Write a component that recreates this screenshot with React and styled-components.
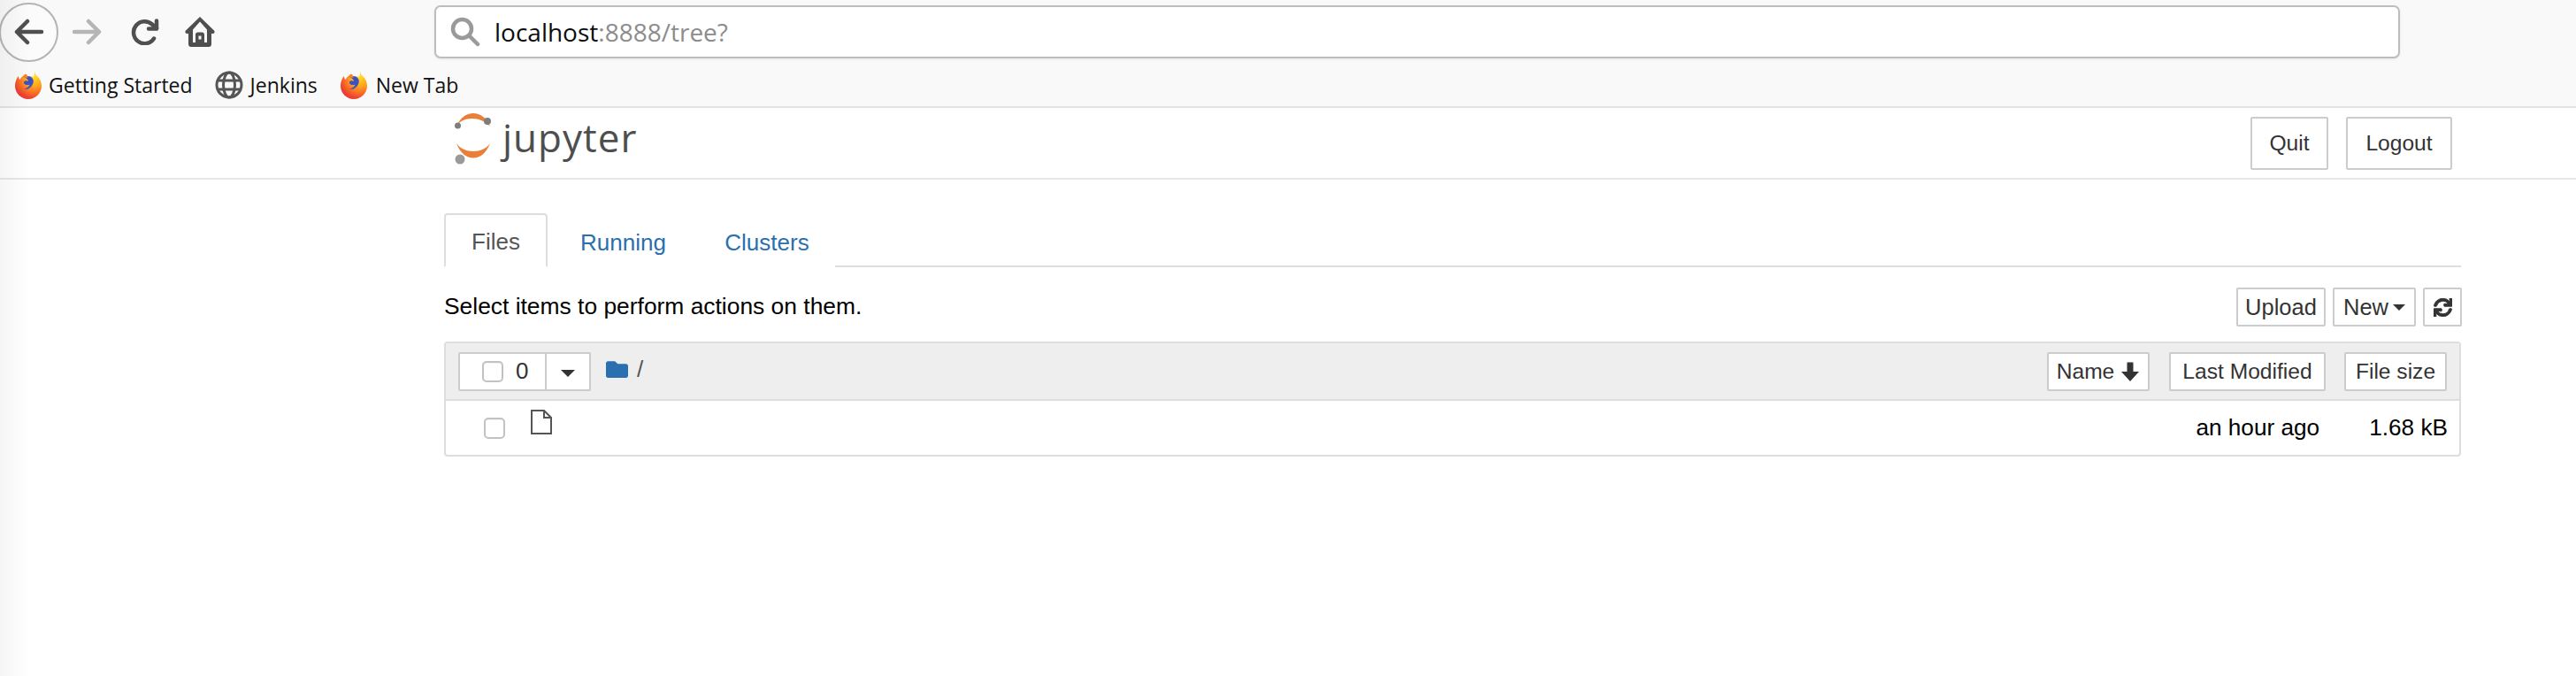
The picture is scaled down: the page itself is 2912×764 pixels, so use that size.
import React from "react";
import styled, { createGlobalStyle } from "styled-components";
import { FaFolder, FaSync } from "react-icons/fa";

const Global = createGlobalStyle`
  html, body { margin: 0; padding: 0; background: #fff; }
  body { font-family: "Liberation Sans", Arial, sans-serif; color: #000; width: 2912px; height: 764px; overflow: hidden; }
  * { box-sizing: border-box; }
`;

const Page = styled.div`
  position: relative;
  width: 2912px;
  height: 764px;
  overflow: hidden;
  &::after {
    content: "";
    position: absolute;
    top: 0; left: 0; bottom: 0;
    width: 34px;
    background: linear-gradient(to right, rgba(0,0,0,0.04), rgba(0,0,0,0));
    pointer-events: none;
  }
`;
const Chrome = styled.div`
  height: 122px;
  background: #f9f9f9;
  border-bottom: 2px solid #e3e3e3;
`;
const NavRow = styled.div`
  height: 72px;
  display: flex;
  align-items: center;
`;
const BackCircle = styled.div`
  width: 67px;
  height: 67px;
  margin-left: -1px;
  border: 2px solid #b4b4b4;
  border-radius: 50%;
  background: #fbfbfb;
  display: flex;
  align-items: center;
  justify-content: center;
  flex: none;
`;
const NavIcon = styled.svg`
  display: block;
  flex: none;
  margin-left: ${p => p.$ml}px;
`;
const AddressBar = styled.div`
  margin-left: 248px;
  width: 2222px;
  height: 60px;
  margin-top: -1px;
  background: #fff;
  border: 2px solid #bdbdbd;
  border-radius: 7px;
  box-shadow: 0 1px 3px rgba(0,0,0,0.08);
  display: flex;
  align-items: center;
  padding-left: 16px;
  font-family: "Open Sans", sans-serif;
  font-size: 28px;
`;
const Host = styled.span`
  margin-left: 16px;
  color: #0c0c0c;
`;
const Rest = styled.span`
  color: #8c8c8c;
`;
const BookmarkRow = styled.div`
  height: 48px;
  display: flex;
  align-items: center;
  padding-left: 17px;
`;
const Bookmark = styled.div`
  display: flex;
  align-items: center;
  gap: ${p => p.$gap}px;
  margin-right: ${p => p.$mr}px;
  font-family: "Open Sans", sans-serif;
  font-size: 23px;
  color: #111;
`;
const Header = styled.div`
  height: 81px;
  border-bottom: 2px solid #e7e7e7;
  padding: 0 140px 0 514px;
  display: flex;
  align-items: flex-start;
  justify-content: space-between;
`;
const Logo = styled.div`
  display: flex;
  align-items: flex-start;
  height: 79px;
`;
const LogoText = styled.span`
  font-family: "Open Sans", sans-serif;
  font-weight: 400;
  font-size: 44px;
  line-height: 1;
  color: #4e4e4e;
  margin: 11px 0 0 10px;
  letter-spacing: 1px;
`;
const HeaderButtons = styled.div`
  display: flex;
  gap: 20px;
  padding-top: 10px;
`;
const Btn = styled.div`
  display: inline-flex;
  align-items: center;
  justify-content: center;
  gap: ${p => p.$gap || 0}px;
  width: ${p => p.$w}px;
  height: ${p => p.$h || 44}px;
  background: #fff;
  border: 2px solid #ccc;
  border-radius: 2px;
  color: #333;
  font-size: ${p => p.$fs || 25.5}px;
  flex: none;
`;
const Main = styled.div`
  margin-left: 502px;
  width: 2280px;
`;
const Tabs = styled.div`
  margin-top: 38px;
  height: 61px;
  display: flex;
  align-items: stretch;
  border-bottom: 2px solid #ddd;
`;
const Tab = styled.div`
  font-size: 26px;
  display: flex;
  align-items: center;
  justify-content: center;
  padding-top: ${p => (p.$active ? 3 : 5)}px;
  width: ${p => p.$w}px;
  height: 61px;
  color: ${p => (p.$active ? "#555" : "#2a6faf")};
  background: #fff;
  border: ${p => (p.$active ? "2px solid #ddd" : "none")};
  border-bottom: ${p => (p.$active ? "2px solid #fff" : "none")};
  border-radius: 4px 4px 0 0;
`;
const ActionRow = styled.div`
  display: flex;
  justify-content: space-between;
  align-items: center;
  height: 44px;
  margin-top: 23px;
  font-size: 26.4px;
`;
const Hint = styled.span`
  padding-bottom: 2px;
`;
const ActionButtons = styled.div`
  display: flex;
  gap: 8px;
  margin-right: -1px;
`;
const Table = styled.div`
  margin-top: 17px;
  border: 2px solid #ddd;
  border-radius: 4px;
`;
const TableHead = styled.div`
  height: 65px;
  background: #eee;
  border-bottom: 2px solid #ddd;
  display: flex;
  align-items: center;
  padding: 0 14px 0 14px;
`;
const SelectGroup = styled.div`
  display: flex;
  width: 150px;
  height: 44px;
  background: #fff;
  border: 2px solid #ccc;
  border-radius: 2px;
  flex: none;
`;
const SelectLeft = styled.div`
  width: 98px;
  display: flex;
  align-items: center;
  padding-left: 25px;
  gap: 14px;
  color: #333;
  font-size: 26px;
  border-right: 2px solid #ccc;
`;
const Check = styled.span`
  display: block;
  width: 24px;
  height: 24px;
  background: #fff;
  border: 2px solid #c2c2c2;
  border-radius: 5px;
  box-shadow: inset 0 1px 1px rgba(0,0,0,0.05);
  flex: none;
`;
const SelectCaret = styled.div`
  flex: 1;
  display: flex;
  align-items: center;
  justify-content: center;
  padding-top: 4px;
`;
const Caret = styled.span`
  display: inline-block;
  border-top: ${p => p.$s}px solid #333;
  border-left: ${p => p.$s}px solid transparent;
  border-right: ${p => p.$s}px solid transparent;
`;
const Crumb = styled.div`
  display: flex;
  align-items: center;
  gap: 10px;
  margin-left: 17px;
  margin-top: -4px;
  flex: 1;
  color: #555;
  font-size: 26px;
  svg { color: #2a6faf; font-size: 25px; display: block; }
`;
const HeadButtons = styled.div`
  display: flex;
  gap: 21px;
`;
const NameButton = styled(Btn)`
  margin-right: 1px;
`;
const TableRow = styled.div`
  height: 61px;
  display: flex;
  align-items: center;
  padding: 0 13px 0 43px;
  font-size: 26.2px;
`;
const FileIcon = styled.svg`
  display: block;
  margin: -14px 0 0 29px;
  flex: none;
`;
const Modified = styled.span`
  margin-left: auto;
`;
const Size = styled.span`
  margin-left: 56px;
`;

const Firefox = ({ id }) => (
  <svg width="30" height="32" viewBox="0 0 30 32">
    <defs>
      <radialGradient id={id} cx="0.72" cy="0.2" r="1">
        <stop offset="0" stopColor="#ffe11f" />
        <stop offset="0.4" stopColor="#ff9a1f" />
        <stop offset="0.75" stopColor="#f2472d" />
        <stop offset="1" stopColor="#d5244a" />
      </radialGradient>
    </defs>
    <path d="M22 0c1 3 .5 4 2 5 3 3 6 6 6 12 0 8-6.500 15-15 15S0 25 0 17C0 12 2 8 4 6c0 2 .5 3 1.500 4C7 7 10 4.500 14 4c-1 1-1.500 2-1.500 3 3-1 7-1 8.500 0 1-2 1.500-4 1-7z" fill={`url(#${id})`} />
    <path d="M10 7c4-2 8-1 10 2 1 2 1 4 0 6-2 5-7 7-10 5 3 0 6-2 6.500-4.500-1 .5-3 1-5 0-2-1-2-3-.5-4 1.500-.5 3-.5 4 .5 0-2-2-4-5-5z" fill="#3d4fc4" />
    <path d="M12 3.500c-2 1-3 2.500-3 4.500 1.500-.5 3-.5 5 0 1-1 0-3-2-4.500z" fill="#f6832a" />
  </svg>
);

export default function App() {
  return (
    <Page>
      <Global />
      <Chrome>
        <NavRow>
          <BackCircle>
            <svg width="34" height="30" viewBox="0 0 34 30" fill="none" stroke="#4f4f4f" strokeWidth="4.5" strokeLinecap="round" strokeLinejoin="round">
              <path d="M31 15H3M15 3 3 15l12 12" />
            </svg>
          </BackCircle>
          <NavIcon $ml={15} width="34" height="30" viewBox="0 0 34 30" fill="none" stroke="#b5b5b5" strokeWidth="4.5" strokeLinecap="round" strokeLinejoin="round">
            <path d="M3 15h28M19 3l12 12-12 12" />
          </NavIcon>
          <NavIcon $ml={33} width="32" height="30" viewBox="0 0 32 30" fill="none" stroke="#4f4f4f" strokeWidth="4.5" strokeLinecap="round" strokeLinejoin="round">
            <path d="M26 22.500A12.500 12.500 0 1 1 24 6.500L29 11" />
            <path d="M29 2.500V11.500H20" />
          </NavIcon>
          <NavIcon $ml={29} width="34" height="34" viewBox="0 0 34 34" fill="#4f4f4f">
            <path fillRule="evenodd" d="M17 0 33 15.500c1.300 1.300.4 3.500-1.400 3.500H30v12c0 1.700-1.300 3-3 3H7c-1.700 0-3-1.300-3-3V19H2.400C.6 19-.3 16.800 1 15.500L17 0zm0 5.500L9 14.500V29h3v-9c0-1.500 1.100-2.500 2.500-2.500h5c1.400 0 2.500 1 2.500 2.500v9h3V14.500L17 5.500z" />
            <path fill="#f9f9f9" d="M15.500 21.500h3v4h-3z" />
          </NavIcon>
          <AddressBar>
            <svg width="34" height="34" viewBox="0 0 34 34" fill="none" stroke="#9a9a9a" strokeWidth="4.500" strokeLinecap="round">
              <circle cx="13.500" cy="13.500" r="10.500" />
              <path d="M21.500 21.500 31 31" />
            </svg>
            <Host>localhost<Rest>:8888/tree?</Rest></Host>
          </AddressBar>
        </NavRow>
        <BookmarkRow>
          <Bookmark $gap={8} $mr={25}><Firefox id="ffa" />Getting Started</Bookmark>
          <Bookmark $gap={8} $mr={26}>
            <svg width="32" height="32" viewBox="0 0 32 32" fill="none" stroke="#555" strokeWidth="3">
              <circle cx="16" cy="16" r="14" />
              <ellipse cx="16" cy="16" rx="6.500" ry="14" />
              <path d="M3 11h26M3 21h26" />
            </svg>
            Jenkins
          </Bookmark>
          <Bookmark $gap={10} $mr={0}><Firefox id="ffb" />New Tab</Bookmark>
        </BookmarkRow>
      </Chrome>
      <Header>
        <Logo>
          <svg width="44" height="64" viewBox="0 0 44 64">
            <path d="M2 28C8 16 30 16 40 28 32 8 10 8 2 28z" fill="#e8803a" transform="translate(0 -7)" />
            <path d="M2 36C10 48 32 48 40 36 32 58 10 58 2 36z" fill="#e8803a" transform="translate(0 4)" />
            <circle cx="3.500" cy="20" r="3.500" fill="#7d7d7d" />
            <circle cx="37" cy="15" r="4" fill="#7d7d7d" />
            <circle cx="6" cy="63" r="5.500" fill="#9a9a9a" transform="translate(0 -5)" />
          </svg>
          <LogoText>jupyter</LogoText>
        </Logo>
        <HeaderButtons>
          <Btn $w={88} $h={60} $fs={24.6}>Quit</Btn>
          <Btn $w={120} $h={60} $fs={24.6}>Logout</Btn>
        </HeaderButtons>
      </Header>
      <Main>
        <Tabs>
          <Tab $active $w={117}>Files</Tab>
          <Tab $w={171}>Running</Tab>
          <Tab $w={154}>Clusters</Tab>
        </Tabs>
        <ActionRow>
          <Hint>Select items to perform actions on them.</Hint>
          <ActionButtons>
            <Btn $w={101}>Upload</Btn>
            <Btn $w={94} $gap={5}>New <Caret $s={7} /></Btn>
            <Btn $w={44}><FaSync size={21} stroke="currentColor" strokeWidth="24" /></Btn>
          </ActionButtons>
        </ActionRow>
        <Table>
          <TableHead>
            <SelectGroup>
              <SelectLeft><Check />0</SelectLeft>
              <SelectCaret><Caret $s={8} /></SelectCaret>
            </SelectGroup>
            <Crumb><FaFolder />/</Crumb>
            <HeadButtons>
              <NameButton $w={116} $gap={7} $fs={24.6}>
                Name
                <svg width="22" height="24" viewBox="0 0 22 24" fill="#333">
                  <path d="M7.500 1.500h7v10.500H21L11 23 1 12h6.500z" />
                </svg>
              </NameButton>
              <Btn $w={177} $fs={24.6}>Last Modified</Btn>
              <Btn $w={116} $fs={24.6}>File size</Btn>
            </HeadButtons>
          </TableHead>
          <TableRow>
            <Check />
            <FileIcon width="24" height="28" viewBox="0 0 24 28" fill="none" stroke="#555" strokeWidth="2">
              <path d="M1 1h14l8 8v18H1zM15 1v8h8" />
            </FileIcon>
            <Modified>an hour ago</Modified>
            <Size>1.68 kB</Size>
          </TableRow>
        </Table>
      </Main>
    </Page>
  );
}
